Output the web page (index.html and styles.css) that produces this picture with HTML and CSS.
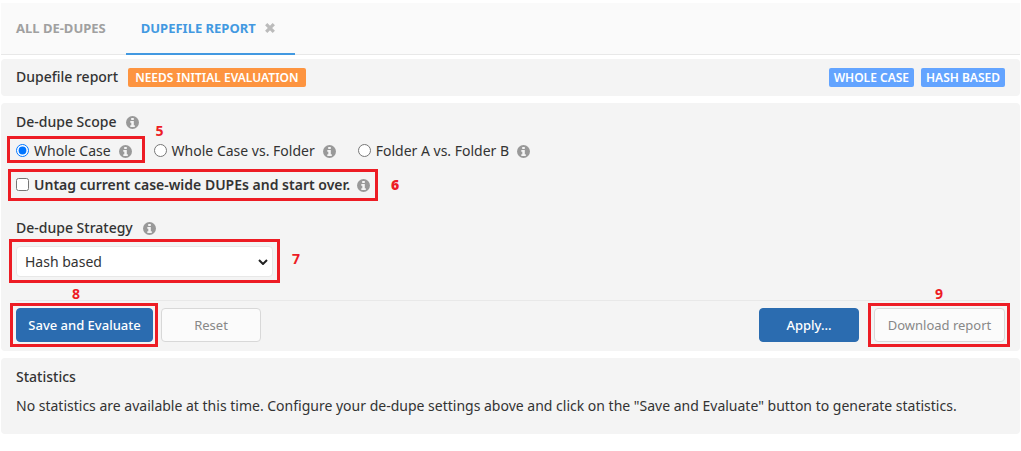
FILE: index.html
```html
<!DOCTYPE html>
<html lang="en">

<head>
    <meta charset="UTF-8">
    <meta name="viewport" content="width=device-width, initial-scale=1.0">
    <title>De-dupes | Dupefile report</title>
    <link rel="stylesheet" href="styles.css">
</head>

<body>
    <svg class="sprite" aria-hidden="true">
        <symbol id="info" viewBox="0 0 13 13">
            <circle cx="6.5" cy="6.5" r="6.5" fill="#999" />
            <path d="M5.200 2h2.600v2H5.200zM4.300 5h3.500v4.200h1V11H4.300V9.200h1V6.700h-1z" fill="#f4f4f4" />
        </symbol>
    </svg>
    <nav class="tabs">
        <a class="tab" href="#all">ALL DE-DUPES</a>
        <div class="tab active">
            <a href="#report">DUPEFILE REPORT</a>
            <button class="close" aria-label="Close tab">
                <svg width="10" height="10" viewBox="0 0 10 10"><path d="M1.200 1.200l7.600 7.600M8.800 1.200l-7.600 7.600" stroke="#bbb" stroke-width="3.200" /></svg>
            </button>
        </div>
    </nav>
    <main>
        <header class="panel report-header">
            <h1 class="title">Dupefile report</h1>
            <span class="badge status">NEEDS INITIAL EVALUATION</span>
            <div class="tags">
                <span class="badge">WHOLE CASE</span>
                <span class="badge">HASH BASED</span>
            </div>
        </header>
        <form class="panel settings">
            <h2 class="title">De-dupe Scope <svg class="info"><use href="#info" /></svg></h2>
            <div class="scope">
                <div class="option marked">
                    <input type="radio" name="scope" id="whole-case" checked>
                    <label for="whole-case">Whole Case</label>
                    <svg class="info"><use href="#info" /></svg>
                    <span class="marker marker-scope"><b>5</b></span>
                </div>
                <div class="option">
                    <input type="radio" name="scope" id="case-folder">
                    <label for="case-folder">Whole Case vs. Folder</label>
                    <svg class="info"><use href="#info" /></svg>
                </div>
                <div class="option">
                    <input type="radio" name="scope" id="folder-folder">
                    <label for="folder-folder">Folder A vs. Folder B</label>
                    <svg class="info"><use href="#info" /></svg>
                </div>
            </div>
            <div class="option untag marked">
                <input type="checkbox" id="untag">
                <label for="untag">Untag current case-wide DUPEs and start over.</label>
                <svg class="info"><use href="#info" /></svg>
                <span class="marker marker-untag"><b>6</b></span>
            </div>
            <h2 class="title"><label for="strategy">De-dupe Strategy</label> <svg class="info"><use href="#info" /></svg></h2>
            <div class="strategy marked">
                <select id="strategy">
                    <option>Hash based</option>
                </select>
                <svg class="arrow" width="10" height="6" viewBox="0 0 10 6"><path d="M1 1l4 4 4-4" fill="none" stroke="#222" stroke-width="2" /></svg>
                <span class="marker marker-strategy"><b>7</b></span>
            </div>
            <div class="actions">
                <div class="marked">
                    <button type="button" class="button primary save">Save and Evaluate</button>
                    <span class="marker marker-save"><b>8</b></span>
                </div>
                <button type="reset" class="button">Reset</button>
                <button type="button" class="button primary apply">Apply...</button>
                <div class="marked">
                    <button type="button" class="button download">Download report</button>
                    <span class="marker marker-download"><b>9</b></span>
                </div>
            </div>
        </form>
        <section class="panel statistics">
            <h2 class="title">Statistics</h2>
            <p>No statistics are available at this time. Configure your de-dupe settings above and click on the "Save and Evaluate" button to generate statistics.</p>
        </section>
    </main>
</body>

</html>
```

FILE: styles.css
```css
:root {
    --text-color: #333;
    --panel-color: #f4f4f4;
    --border-color: #e8e8e8;
    --accent-color: #4299e1;
    --primary-color: #2b6cb0;
    --marker-color: #ed1c24;
}

* {
    box-sizing: border-box;
}

body {
    margin: 0;
    padding: 3px 1px 0;
    font-family: "Noto Sans", sans-serif;
    font-size: 14px;
    line-height: 22px;
    color: var(--text-color);
    background-color: #fff;
}

button,
select,
input {
    margin: 0;
    font: inherit;
}

.sprite {
    position: absolute;
    width: 0;
    height: 0;
}

.tabs {
    display: flex;
    height: 52px;
    background-color: #fafafa;
    border-bottom: 1px solid var(--border-color);
    font-size: 13px;
    font-weight: 700;
}

.tab {
    display: flex;
    align-items: center;
    height: 52px;
    padding: 0 20px 0 15px;
    color: #a0a0a0;
    border-bottom: 2px solid transparent;
    text-decoration: none;
}

.tab a {
    color: inherit;
    text-decoration: none;
}

.tab.active {
    gap: 9px;
    color: var(--accent-color);
    border-color: var(--accent-color);
}

.close {
    display: flex;
    padding: 0;
    border: none;
    background: transparent;
    cursor: pointer;
}

main {
    display: grid;
    gap: 7px;
    margin-top: 4px;
}

.panel {
    padding: 8px 15px;
    background-color: var(--panel-color);
    border-radius: 4px;
}

.title {
    display: flex;
    align-items: center;
    gap: 10px;
    margin: 0;
    font-size: 14px;
    font-weight: 500;
}

.info {
    flex: none;
    width: 13px;
    height: 13px;
}

.report-header {
    display: flex;
    align-items: center;
    gap: 10px;
    height: 37px;
    padding-top: 7px;
}

.badge {
    padding: 0 5px;
    border-radius: 2px;
    font-size: 12px;
    line-height: 19px;
    font-weight: 600;
    color: #fff;
    background-color: #63a4ff;
}

.badge.status {
    padding: 0 7px;
    background-color: #fd9440;
}

.tags {
    display: flex;
    gap: 7px;
    margin-left: auto;
}

.marked {
    position: relative;
}

.settings {
    padding-bottom: 9px;
}

.scope {
    display: flex;
    gap: 22px;
    margin-top: 7px;
}

.option {
    display: flex;
    align-items: center;
    width: fit-content;
}

.option input {
    width: 13px;
    height: 13px;
    margin-bottom: 2px;
}

.option label {
    margin: 0 8px 0 5px;
}

.untag {
    margin: 12px 0 21px;
    font-weight: 600;
}

.untag label {
    margin-right: 7px;
}

.strategy {
    width: 257px;
    margin-top: 7px;
}

.strategy select {
    display: block;
    appearance: none;
    width: 100%;
    height: 31px;
    padding: 0 8px;
    color: var(--text-color);
    background-color: #fff;
    border: 1px solid var(--border-color);
    border-radius: 4px;
}

.strategy .arrow {
    position: absolute;
    top: 13px;
    right: 5px;
    pointer-events: none;
}

.actions {
    display: flex;
    gap: 8px;
    margin-top: 23px;
    padding-top: 7px;
    border-top: 1px solid var(--border-color);
}

.button {
    min-width: 100px;
    height: 34px;
    padding: 0 11px;
    font-size: 13px;
    color: #888;
    background-color: #fbfbfb;
    border: 1px solid #d8d8d8;
    border-radius: 4px;
    cursor: pointer;
}

.button.primary {
    color: #fff;
    font-weight: 500;
    background-color: var(--primary-color);
    border-color: var(--primary-color);
}

.save {
    min-width: 137px;
}

.apply {
    margin: 0 7px 0 auto;
}

.download {
    min-width: 131px;
}

.statistics {
    min-height: 76px;
}

.statistics p {
    margin: 7px 0 0;
}

/* numbered callouts drawn over the controls */
.marker {
    position: absolute;
    inset: -5px -5px -5px -6px;
    border: 3px solid var(--marker-color);
    pointer-events: none;
}

.marker b {
    position: absolute;
    font-size: 14px;
    line-height: 16px;
    color: var(--marker-color);
}

.marker-scope {
    inset: -4px -13px -1px -9px;
}

.marker-scope b {
    top: -16px;
    right: -22px;
}

.marker-untag {
    inset: -5px -8px -5px -8px;
}

.marker-untag b {
    top: 5px;
    right: -24px;
}

.marker-strategy {
    inset: -7px -7px -6px -7px;
}

.marker-strategy b {
    top: 9px;
    right: -23px;
}

.marker-save b,
.marker-download b {
    top: -20px;
    left: 0;
    right: 0;
    text-align: center;
}

.marker-save b {
    right: 16px;
}
```
